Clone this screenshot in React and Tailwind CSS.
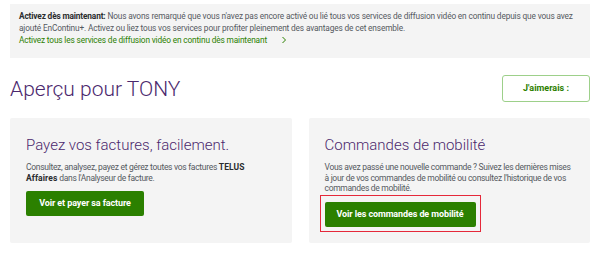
import React from 'react';

const body = { fontFamily: 'Roboto, "Liberation Sans", Arial, sans-serif' };

const Card = ({ title, children, action, highlight }) => (
  <div className="bg-[#f4f4f4] rounded-[2px] px-[16px] pt-[17px] pb-[16px] h-[125px]">
    <h2 className="text-[15px] leading-[20px] font-light text-[#4b286d]">
      {title}
    </h2>
    <p className="mt-[7px] text-[8.5px] leading-[10.5px] tracking-[-0.3px] text-[#54595f]">{children}</p>
    {highlight ? (
      <div className="mt-[1px] ml-[-5px] inline-block border border-[#e5283a] p-[4px]">
        <button className="h-[25px] w-[151px] bg-[#2b8000] rounded-[2px] text-white text-[9px] font-bold tracking-[-0.1px]">
          {action}
        </button>
      </div>
    ) : (
      <button className="mt-[8px] h-[25px] w-[118px] bg-[#2b8000] rounded-[2px] text-white text-[9px] font-bold tracking-[-0.1px]">
        {action}
      </button>
    )}
  </div>
);

export default function App() {
  return (
    <div className="w-[600px] h-[253px] bg-white px-[10px] pt-[4px]" style={body}>
      {/* Banner */}
      <div className="bg-[#f4f4f4] pl-[9px] pr-[8px] pt-[6px] pb-[12px] text-[8.3px] leading-[12px] tracking-[-0.15px] text-[#54595f]">
        <p>
          <span className="font-bold text-[#2a2c2e]">Activez dès maintenant:</span> Nous avons remarqué que vous n'avez pas encore activé ou lié tous vos services de diffusion vidéo en continu depuis que vous avez ajouté EnContinu+. Activez ou liez tous vos services pour profiter pleinement des avantages de cet ensemble.
        </p>
        <a className="text-[#2b8000] flex items-center gap-[14px]">
          Activez tous les services de diffusion vidéo en continu dès maintenant
          <svg width="6" height="8" viewBox="0 0 6 8" fill="none">
            <path d="M1.5 1 L4.5 4 L1.5 7" stroke="#2b8000" strokeWidth="1" />
          </svg>
        </a>
      </div>

      {/* Heading row */}
      <div className="mt-[17px] flex items-center justify-between">
        <h1 className="text-[21px] leading-[26px] font-light text-[#4b286d]">
          Aperçu pour TONY
        </h1>
        <button className="w-[88px] h-[27px] border border-[#9dd08a] rounded-[3px] text-[#2b8000] text-[9px] font-bold">
          J'aimerais :
        </button>
      </div>

      {/* Cards */}
      <div className="mt-[16px] grid grid-cols-2 gap-[17px]">
        <Card title="Payez vos factures, facilement." action="Voir et payer sa facture">
          Consultez, analysez, payez et gérez toutes vos factures <span className="font-bold tracking-[0.1px] text-[#2a2c2e]">TELUS Affaires</span> dans l'Analyseur de facture.
        </Card>
        <Card title="Commandes de mobilité" action="Voir les commandes de mobilité" highlight>
          Vous avez passé une nouvelle commande ? Suivez les dernières mises à jour de vos commandes de mobilité ou consultez l'historique de vos commandes de mobilité.
        </Card>
      </div>
    </div>
  );
}
